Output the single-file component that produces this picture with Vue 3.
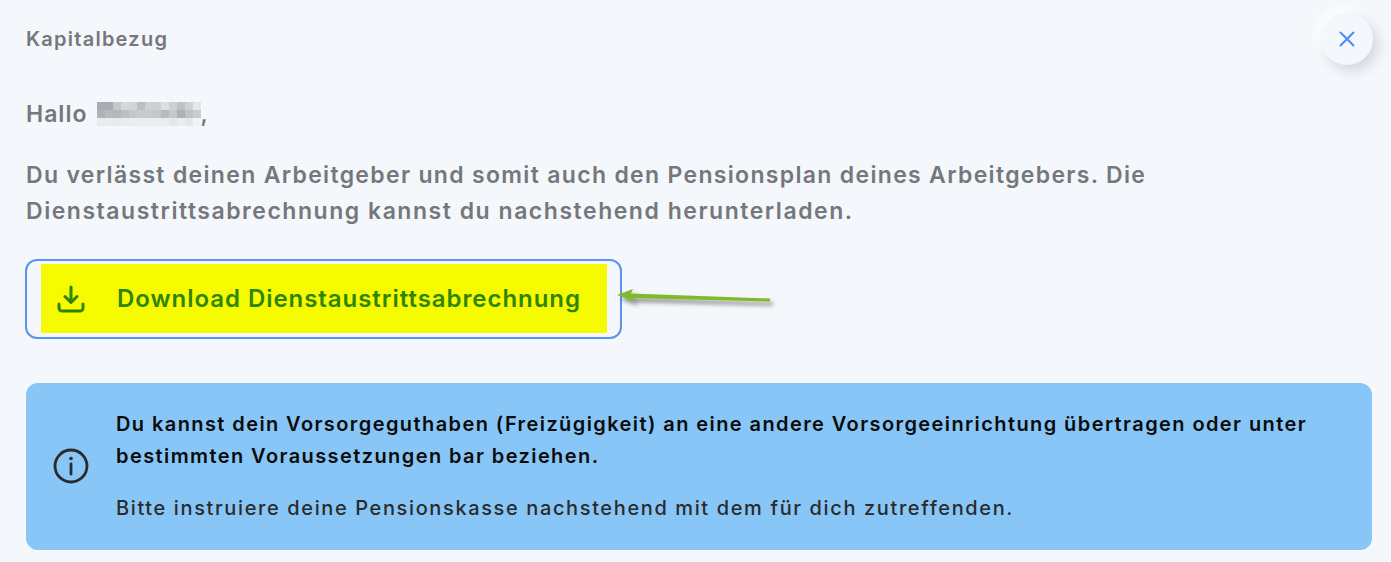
<script setup>
const shades = [
  '#a9abb0','#a9abb0','#c4c6ca','#d5d7da','#d2d4d8','#bcbec3','#ced0d4','#ced0d4','#dcdee1','#cdcfd3','#bfc1c5','#cfd1d4','#e4e6e9',
  '#b0b2b7','#b8babf','#b5b7bc','#bcbec2','#c5c7cb','#c7c9cd','#c7c9cd','#c5c7cb','#b8babe','#c6c8cb','#aeb0b5','#c0c2c6','#c9cbce',
  '#e9ebee','#e9ebee','#e8eaed','#e9ebee','#ebedf0','#ebedf0','#ebedf0','#ebedf0','#ebedf0','#e5e7ea','#ebedf0','#e5e7ea','#f0f2f5'
]
</script>

<template>
  <main class="page">
    <header class="head">
      <h1 class="title">Kapitalbezug</h1>
      <button class="close" aria-label="Schliessen">
        <svg width="18" height="18" viewBox="0 0 18 18" fill="none" stroke="#4a8cf5" stroke-width="2" stroke-linecap="round">
          <path d="M2.500 2.500l13 13M15.500 2.500l-13 13" />
        </svg>
      </button>
    </header>

    <p class="hello">
      <span>Hallo</span>
      <span class="blur">
        <i v-for="(c, n) in shades" :key="n" :style="{ background: c }"></i>
      </span>
      <span>,</span>
    </p>

    <p class="lead">
      Du verlässt deinen Arbeitgeber und somit auch den Pensionsplan deines Arbeitgebers. Die<br />
      <span class="lead-second">Dienstaustrittsabrechnung kannst du nachstehend herunterladen.</span>
    </p>

    <div class="download-row">
      <a class="download">
        <span class="mark">
          <svg class="dl-icon" width="28" height="28" viewBox="0 0 28 28" fill="none" stroke="#2e8500" stroke-width="3" stroke-linecap="round" stroke-linejoin="round">
            <path d="M14 2v15M8 11.500l6 6 6-6M2 19v4a3 3 0 0 0 3 3h18a3 3 0 0 0 3-3v-4" />
          </svg>
          <span class="dl-text">Download Dienstaustrittsabrechnung</span>
        </span>
      </a>
      <svg class="arrow" width="170" height="36" viewBox="0 0 170 36">
        <defs>
          <filter id="arrow-shadow" x="-10%" y="-50%" width="120%" height="220%">
            <feDropShadow dx="3" dy="4" stdDeviation="2" flood-color="#444" flood-opacity="0.6" />
          </filter>
        </defs>
        <path d="M1 13L17 7 15 11.500 154 16.500 154 19.500 16 16 20 20Z" fill="#82b92c" filter="url(#arrow-shadow)" />
      </svg>
    </div>

    <section class="info">
      <svg class="info-icon" width="36" height="36" viewBox="0 0 36 36" fill="none" stroke="#2b2b2b" stroke-width="2.800">
        <circle cx="18" cy="18" r="16" />
        <path d="M18 16v10" stroke-linecap="round" />
        <circle cx="18" cy="10.500" r="1.800" fill="#2b2b2b" stroke="none" />
      </svg>
      <div class="info-body">
        <p class="info-strong">
          Du kannst dein Vorsorgeguthaben (Freizügigkeit) an eine andere Vorsorgeeinrichtung übertragen oder unter<br />
          bestimmten Voraussetzungen bar beziehen.
        </p>
        <p class="info-note">Bitte instruiere deine Pensionskasse nachstehend mit dem für dich zutreffenden.</p>
      </div>
    </section>
  </main>
</template>

<style>
html, body { margin: 0; background: #f4f7fb; }
</style>

<style scoped>
.page {
  box-sizing: border-box;
  width: 1391px;
  height: 562px;
  overflow: hidden;
  padding: 13px 19px 0 26px;
  background: #f4f7fb;
  font-family: Inter, "Liberation Sans", sans-serif;
  color: #75777c;
}
.head {
  display: flex;
  justify-content: space-between;
  align-items: flex-start;
  height: 52px;
}
.title {
  margin: 14px 0 0;
  font-size: 20px;
  line-height: 24px;
  font-weight: 600;
  letter-spacing: 1.25px;
}
.close {
  width: 52px;
  height: 52px;
  margin-right: -1px;
  padding: 0;
  border: 0;
  border-radius: 50%;
  background: #f4f7fb;
  display: flex;
  align-items: center;
  justify-content: center;
  box-shadow: 5px 6px 12px rgba(170, 180, 195, 0.45), -5px -5px 12px rgba(255, 255, 255, 0.9);
}
.hello {
  margin: 33px 0 0;
  font-size: 23px;
  line-height: 32px;
  font-weight: 600;
  letter-spacing: 1px;
  display: flex;
  align-items: center;
}
.blur {
  display: inline-grid;
  grid-template-columns: repeat(13, 8px);
  grid-auto-rows: 8px;
  margin: 0 -1px 0 10px;
}
.lead {
  margin: 27px 0 0;
  font-size: 23px;
  line-height: 36px;
  font-weight: 600;
  letter-spacing: 1.32px;
}
.lead-second { letter-spacing: 1.53px; }
.download-row {
  position: relative;
  margin-top: 30px;
}
.download {
  box-sizing: border-box;
  display: flex;
  width: 597px;
  height: 80px;
  margin-left: -1px;
  padding: 3px 13px 4px 14px;
  border: 2px solid #5a93f2;
  border-radius: 12px;
}
.mark {
  flex: 1;
  display: flex;
  align-items: center;
  background: #f6fb00;
  color: #2e8500;
}
.dl-icon { margin-left: 16px; }
.dl-text {
  margin-left: 32px;
  font-size: 24px;
  font-weight: 600;
  letter-spacing: 0.95px;
  white-space: nowrap;
}
.arrow {
  position: absolute;
  left: 590px;
  top: 23px;
}
.info {
  box-sizing: border-box;
  display: flex;
  align-items: center;
  height: 167px;
  margin-top: 44px;
  padding: 0 0 2px 27px;
  border-radius: 12px;
  background: #88c6f8;
}
.info-icon { flex: none; }
.info-body { margin-left: 27px; }
.info-strong {
  margin: 0;
  font-size: 20px;
  line-height: 32px;
  font-weight: 600;
  letter-spacing: 1.41px;
  color: #0c0c0c;
  white-space: nowrap;
}
.info-note {
  margin: 20px 0 0;
  font-size: 20px;
  line-height: 32px;
  font-weight: 500;
  letter-spacing: 1.62px;
  color: #2b2b2b;
  white-space: nowrap;
}
</style>
